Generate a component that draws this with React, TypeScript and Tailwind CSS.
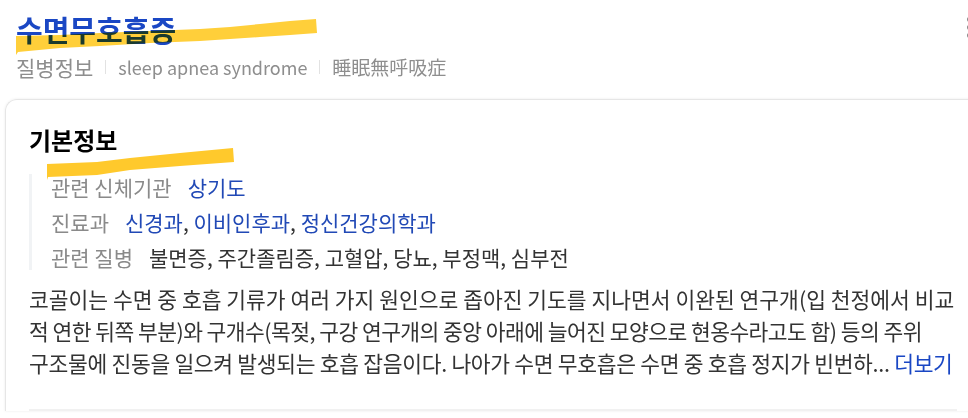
import React from 'react';

const FONT = { fontFamily: '"Noto Sans CJK KR", "Noto Sans", sans-serif' };

function Highlights() {
  // brush-stroke marker highlights laid over the two headings
  return (
    <svg
      className="pointer-events-none absolute left-0 top-0 mix-blend-multiply"
      width={968}
      height={418}
      viewBox="0 0 968 418"
    >
      <polygon
        points="16,36 60,35 100,33 150,31 200,29 230,27 260,24 290,21 316,19 317,33 290,35 260,37 230,39 200,41 150,43 100,46 60,48 18,52 16,55"
        fill="#ffcf3a"
      />
      <polygon
        points="47,164 97,162 130,158 180,153 233,148 234,162 180,166 130,170 97,175 48,177 47,180"
        fill="#ffc92c"
      />
    </svg>
  );
}

export default function App() {
  return (
    <div className="relative h-[418px] w-[968px] overflow-hidden bg-white text-[#333]" style={FONT}>
      {/* Header */}
      <div className="pl-4 pt-[8px]">
        <div className="flex items-start justify-between">
          <h1 className="text-[29px] font-bold leading-[42px] text-[#1a47c4]">수면무호흡증</h1>
          <div className="mr-[-4px] mt-[9px] flex flex-col gap-[3px]">
            <span className="h-[5px] w-[5px] rounded-full bg-[#8a8a8a]" />
            <span className="h-[5px] w-[5px] rounded-full bg-[#8a8a8a]" />
            <span className="h-[5px] w-[5px] rounded-full bg-[#8a8a8a]" />
          </div>
        </div>
        <div className="mt-[4px] flex items-center leading-[26px] text-[#8e8e8e]">
          <span className="text-[21px]">질병정보</span>
          <span className="mx-[12px] h-[14px] w-px bg-[#e2e2e2]" />
          <span className="text-[18px]">sleep apnea syndrome</span>
          <span className="mx-[12px] h-[14px] w-px bg-[#e2e2e2]" />
          <span className="text-[19px]">睡眠無呼吸症</span>
        </div>
      </div>

      {/* Card */}
      <div className="ml-[5px] mt-[19px] w-[990px] rounded-tl-[12px] border-l border-t border-[#e6e6e6] pl-[23px] pt-[25px] shadow-[0_0_3px_rgba(0,0,0,0.08)]">
        <h2 className="text-[24px] font-bold leading-[30px] text-black">기본정보</h2>

        <div className="mt-[19px] flex flex-col gap-[9px] border-l-[3px] border-[#f1f3f5] pl-[19px] text-[21px] leading-[26px]">
          <div className="flex">
            <span className="text-[#8a8a8a]">관련 신체기관</span>
            <span className="ml-[16px] text-[#2149b6]">상기도</span>
          </div>
          <div className="flex">
            <span className="text-[#8a8a8a]">진료과</span>
            <span className="ml-[16px] text-[#2149b6]">
              신경과<span className="text-[#333]">, </span>이비인후과<span className="text-[#333]">, </span>정신건강의학과
            </span>
          </div>
          <div className="flex">
            <span className="text-[#8a8a8a]">관련 질병</span>
            <span className="ml-[16px] text-[#333]">불면증, 주간졸림증, 고혈압, 당뇨, 부정맥, 심부전</span>
          </div>
        </div>

        <p className="mt-[13px] w-[940px] text-[21.5px] leading-[32px] text-[#333]">
          <span className="block whitespace-nowrap">
            코골이는 수면 중 호흡 기류가 여러 가지 원인으로 좁아진 기도를 지나면서 이완된 연구개(입 천정에서 비교
          </span>
          <span className="block whitespace-nowrap tracking-[-0.55px]">
            적 연한 뒤쪽 부분)와 구개수(목젖, 구강 연구개의 중앙 아래에 늘어진 모양으로 현옹수라고도 함) 등의 주위
          </span>
          <span className="block whitespace-nowrap tracking-[-0.3px]">
            구조물에 진동을 일으켜 발생되는 호흡 잡음이다. 나아가 수면 무호흡은 수면 중 호흡 정지가 빈번하...{' '}
            <span className="text-[#1a47c4]">더보기</span>
          </span>
        </p>

        <div className="mt-[30px] h-[2px] w-[928px] bg-[#f1f1f1]" />
      </div>

      <Highlights />
    </div>
  );
}
